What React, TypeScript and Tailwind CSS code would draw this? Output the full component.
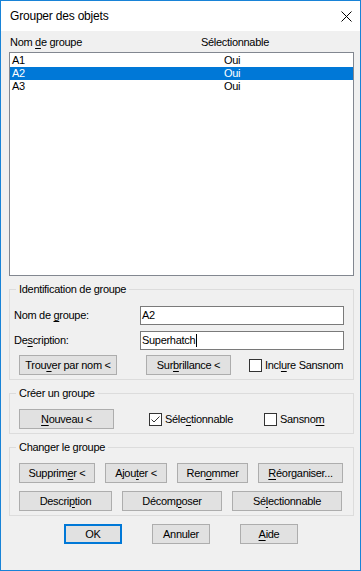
import React from "react";

function U({ c }: { c: string }) {
  return <span className="underline decoration-1 underline-offset-[2px]">{c}</span>;
}

function Btn({ className, children }: { className: string; children: React.ReactNode }) {
  return (
    <div
      className={`h-[20px] shrink-0 flex items-center justify-center bg-[#e1e1e1] border border-[#adadad] text-black whitespace-nowrap ${className}`}
    >
      {children}
    </div>
  );
}

function Check({ checked }: { checked?: boolean }) {
  return (
    <div className="w-[13px] h-[13px] shrink-0 border border-[#333333] bg-white">
      {checked && (
        <svg width="11" height="11" viewBox="0 0 11 11" className="block">
          <path d="M1.5 5.5 L4 8 L9.5 2.5" fill="none" stroke="#333333" strokeWidth="1" />
        </svg>
      )}
    </div>
  );
}

function Row({ name, sel }: { name: string; sel?: boolean }) {
  return (
    <div className={`flex h-[13px] pl-[2px] ${sel ? "bg-[#0078d7] text-white" : ""}`}>
      <span className="w-[212px]">{name}</span>
      <span>Oui</span>
    </div>
  );
}

export default function App() {
  return (
    <div className="w-[361px] h-[571px] border border-[#1883d7] bg-[#f0f0f0] flex flex-col text-[11px] leading-[13px] tracking-[-0.3px] text-black font-['Liberation_Sans',Arial,sans-serif]">
      <div className="h-[30px] shrink-0 bg-white flex items-center justify-between pl-[9px] pr-[8px]">
        <span className="text-[12px] tracking-[-0.2px]">Grouper des objets</span>
        <svg width="11" height="11" viewBox="0 0 11 11" className="block">
          <path d="M0.5 0.5 L10.5 10.5 M10.5 0.5 L0.5 10.5" stroke="#000" strokeWidth="1" fill="none" />
        </svg>
      </div>
      <div className="flex flex-col pl-[8px]">
        <div className="flex mt-[5px] pl-[1px]">
          <span className="w-[191px]">
            Nom <U c="d" />e groupe
          </span>
          <span>Sélectionnable</span>
        </div>
        <div className="mt-[3px] w-[345px] h-[224px] border border-[#828790] bg-white pt-px">
          <Row name="A1" />
          <Row name="A2" sel />
          <Row name="A3" />
        </div>

        <fieldset className="mt-[7px] w-[345px] min-w-0 border border-[#dcdcdc]">
          <legend className="ml-[6px] px-[3px] leading-[13px]">Identification de groupe</legend>
          <div className="flex flex-col pt-[10px] pb-[4px]">
            <div className="flex items-center h-[19px]">
              <span className="pl-[4px] w-[130px]">
                Nom de <U c="g" />roupe:
              </span>
              <div className="w-[204px] h-[19px] border border-[#7a7a7a] bg-white pl-[1px] flex items-center">A2</div>
            </div>
            <div className="flex items-center h-[19px] mt-[6px]">
              <span className="pl-[4px] w-[130px]">
                De<U c="s" />cription:
              </span>
              <div className="w-[204px] h-[19px] border border-[#7a7a7a] bg-white pl-[1px] flex items-center">
                Superhatch
                <span className="inline-block w-px h-[13px] bg-black ml-px" />
              </div>
            </div>
            <div className="flex items-center mt-[5px] pl-[9px]">
              <Btn className="w-[98px]">
                <span>
                  Trou<U c="v" />er par nom &lt;
                </span>
              </Btn>
              <Btn className="w-[85px] ml-[29px]">
                <span>
                  Sur<U c="b" />rillance &lt;
                </span>
              </Btn>
              <div className="ml-[18px]">
                <Check />
              </div>
              <span className="ml-[3px]">
                Incl<U c="u" />re Sansnom
              </span>
            </div>
          </div>
        </fieldset>

        <fieldset className="mt-[7px] w-[345px] min-w-0 border border-[#dcdcdc]">
          <legend className="ml-[6px] px-[3px] leading-[13px]">Créer un groupe</legend>
          <div className="flex items-center pt-[9px] pb-[4px] pl-[9px]">
            <Btn className="w-[95px]">
              <span>
                <U c="N" />ouveau &lt;
              </span>
            </Btn>
            <div className="ml-[35px] w-[115px] flex items-center">
              <Check checked />
              <span className="ml-[3px]">
                Séle<U c="c" />tionnable
              </span>
            </div>
            <Check />
            <span className="ml-[3px]">
              Sansno<U c="m" />
            </span>
          </div>
        </fieldset>

        <fieldset className="mt-[7px] w-[345px] min-w-0 border border-[#dcdcdc]">
          <legend className="ml-[6px] px-[3px] leading-[13px]">Changer le groupe</legend>
          <div className="flex flex-col pt-[9px] pb-[4px] pl-[9px]">
            <div className="flex">
              <Btn className="w-[76px]">
                <span>
                  Supprim<U c="e" />r &lt;
                </span>
              </Btn>
              <Btn className="w-[62px] ml-[10px]">
                <span>
                  Ajou<U c="t" />er &lt;
                </span>
              </Btn>
              <Btn className="w-[71px] ml-[10px]">
                <span>
                  Ren<U c="o" />mmer
                </span>
              </Btn>
              <Btn className="w-[85px] ml-[10px]">
                <span>
                  <U c="R" />éorganiser...
                </span>
              </Btn>
            </div>
            <div className="flex mt-[8px]">
              <Btn className="w-[93px]">
                <span>
                  Descri<U c="p" />tion
                </span>
              </Btn>
              <Btn className="w-[100px] ml-[10px]">
                <span>
                  Décom<U c="p" />oser
                </span>
              </Btn>
              <Btn className="w-[110px] ml-[10px]">
                <span>
                  Sé<U c="l" />ectionnable
                </span>
              </Btn>
            </div>
          </div>
        </fieldset>

        <div className="flex mt-[8px]">
          <div className="ml-[55px] w-[58px] h-[20px] flex items-center justify-center bg-[#e1e1e1] border-2 border-[#0078d7]">
            OK
          </div>
          <Btn className="w-[58px] ml-[30px]">Annuler</Btn>
          <Btn className="w-[58px] ml-[30px]">
            <span>
              <U c="A" />ide
            </span>
          </Btn>
        </div>
      </div>
    </div>
  );
}
